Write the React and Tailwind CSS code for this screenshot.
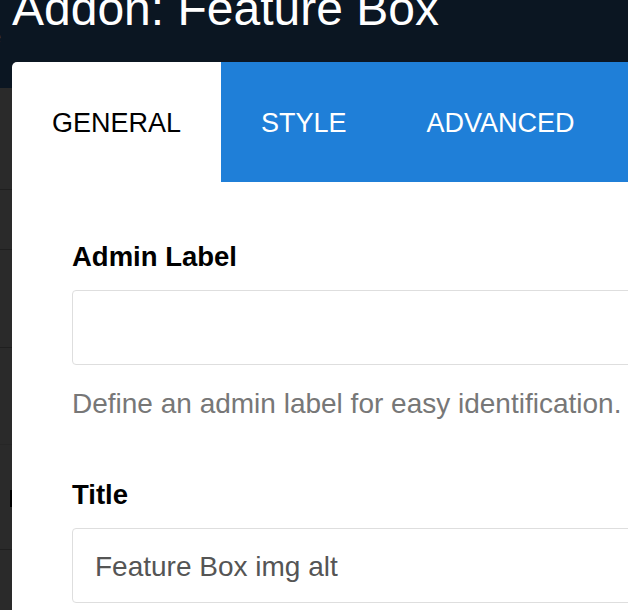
import React from 'react';

const App = () => {
  return (
    <div className="w-[628px] h-[610px] overflow-hidden bg-[#2a2a2a] font-['Liberation_Sans',Arial,sans-serif]">
      {/* Top bar behind the modal */}
      <header className="h-[88px] bg-[#0b1622] overflow-hidden">
        <h1 className="pl-[12px] -mt-[15px] text-[48px] leading-[48px] text-white font-normal whitespace-nowrap">
          Addon: Feature Box
        </h1>
        <div className="-ml-[10px] mt-[-8px] text-[20px] leading-[24px] text-[#5a5f66]">e</div>
      </header>

      <div className="flex">
        {/* Left strip of the page behind */}
        <div className="w-[12px] shrink-0 flex flex-col">
          <div className="h-[102px] border-b border-[#1f1f1f]" />
          <div className="h-[60px] border-b border-[#1f1f1f]" />
          <div className="h-[98px] border-b border-[#1f1f1f]" />
          <div className="h-[97px] border-b border-[#262626]" />
          <div className="h-[105px] border-b border-[#1f1f1f] pt-[45px] flex justify-end">
            <div className="w-[2px] h-[17px] bg-black" />
          </div>
        </div>

        {/* Modal panel */}
        <div className="flex-1 -mt-[26px] relative z-10 bg-white rounded-tl-[5px] h-[600px] overflow-hidden">
          {/* Tabs */}
          <div className="flex h-[120px]">
            <div className="w-[209px] shrink-0 flex items-center justify-center pt-[2px] text-[27px] text-black">
              GENERAL
            </div>
            <div className="flex-1 flex items-center pt-[2px] bg-[#1f7fd8] text-white text-[27px]">
              <span className="px-[40px]">STYLE</span>
              <span className="px-[40px]">ADVANCED</span>
            </div>
          </div>

          {/* Fields */}
          <div className="pl-[60px]">
            <label className="block mt-[61px] text-[27.5px] leading-[28px] font-bold text-black">Admin Label</label>
            <div className="mt-[19px] w-[620px] h-[75px] border border-[#dedede] rounded-[4px]" />
            <p className="mt-[24px] text-[28px] leading-[30px] text-[#777777] whitespace-nowrap">
              Define an admin label for easy identification.
            </p>

            <label className="block mt-[62px] text-[27.5px] leading-[28px] font-bold text-black">Title</label>
            <div className="mt-[19px] w-[620px] h-[75px] border border-[#dedede] rounded-[4px] flex items-center pl-[22px] pt-[3px] text-[28px] text-[#555555]">
              Feature Box img alt
            </div>
          </div>
        </div>
      </div>
    </div>
  );
};

export default App;
